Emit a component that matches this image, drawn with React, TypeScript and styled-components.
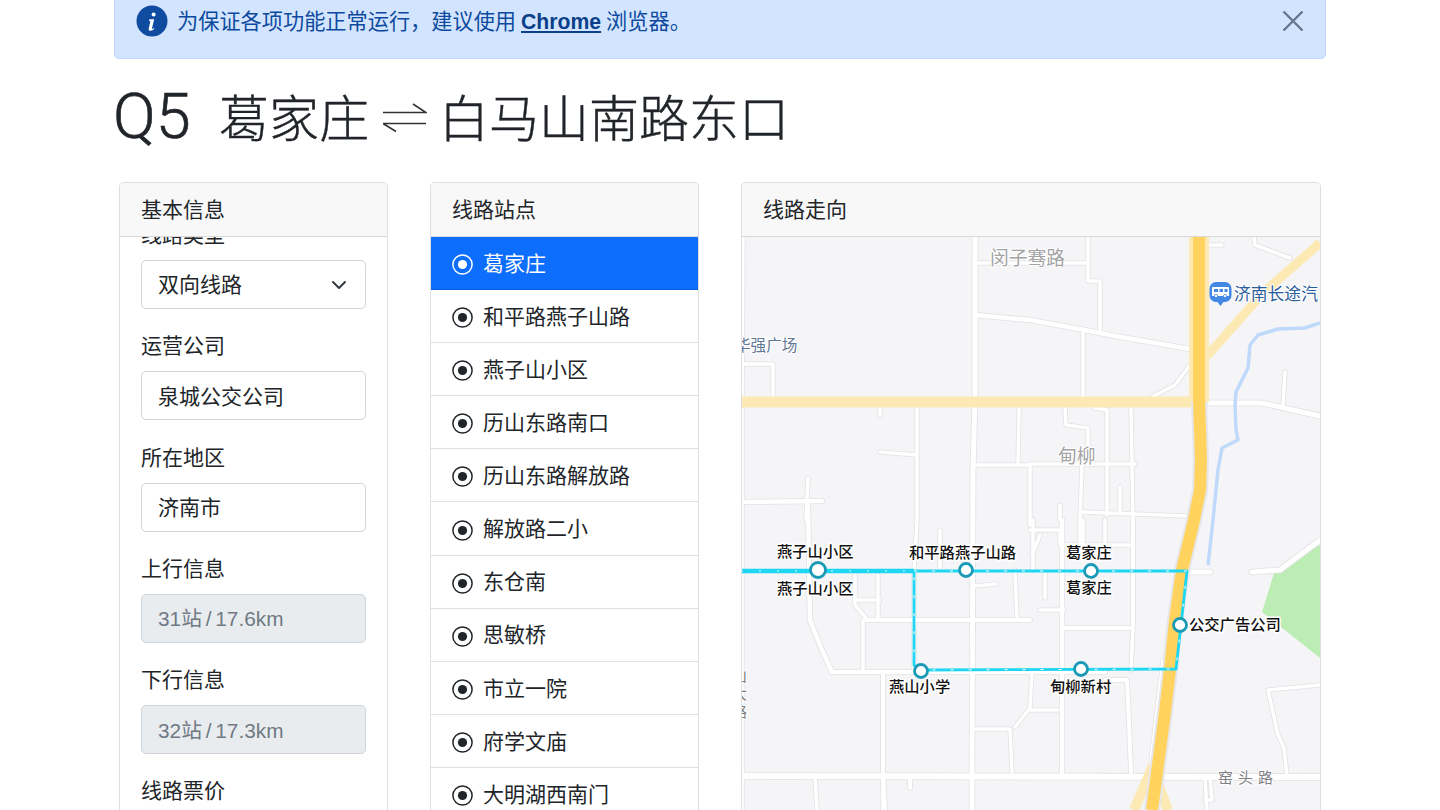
import React from 'react';
import styled, { createGlobalStyle } from 'styled-components';

const FONT = `"Liberation Sans", "Noto Sans CJK SC", sans-serif`;
const Global = createGlobalStyle`
  html, body { margin: 0; padding: 0; height: 810px; overflow: hidden; background: #fff; }
  body { font-family: ${FONT}; font-size: 21px; line-height: 1.5; color: #212529; }
`;
const Page = styled.div`
  width: 1212px; height: 810px; margin: 0 auto; overflow: hidden;
`;
const Alert = styled.div`
  display: flex; align-items: center; box-sizing: border-box;
  height: 89px; margin-top: -30px; padding: 35px 20px 22px 21px; font-size: 21.2px;
  background: #d3e5fe; border: 1px solid #bcd7fb; border-radius: 5px; color: #0d4a9e;
`;
const AlertBadge = styled.svg`
  width: 32px; height: 32px; margin-right: 9px; flex: none;
`;
const AlertMessage = styled.span`
  position: relative; top: 1px; flex: none;
`;
const AlertLink = styled.a`
  font-weight: 700; color: #0b3f8a; text-decoration: underline; margin: 0 5px;
`;
const CloseIcon = styled.svg`
  width: 24px; height: 24px; margin-left: auto; flex: none;
`;
const Title = styled.h1`
  display: flex; align-items: center; height: 60px; margin: 29px 0 34px 0;
  font-family: "Noto Sans CJK SC", sans-serif; font-weight: 300; font-size: 50px; line-height: 60px; color: #212529;
  -webkit-text-stroke: 0.4px #212529;
`;
const RouteCode = styled.span`
  font-family: Roboto, "Liberation Sans", sans-serif; font-weight: 300; font-size: 63px;
  width: 105px; position: relative; top: -1px; left: -1px; -webkit-text-stroke: 0.6px #212529;
`;
const TitleStop = styled.span`
  margin-top: -6px;
`;
const Arrows = styled.svg`
  width: 44px; height: 30px; margin: 0 12px 0 14px; flex: none;
`;
const Columns = styled.div`
  display: grid; grid-template-columns: 269px 269px 580px; column-gap: 42px; padding: 0 5px;
`;
const Card = styled.section`
  box-sizing: border-box; height: 700px; background: #fff;
  border: 1px solid rgba(0,0,0,.125); border-radius: 5px 5px 0 0; overflow: hidden;
`;
const CardHead = styled.header`
  box-sizing: border-box; height: 54px; padding: 11px 21px; line-height: 31px;
  background: #f8f8f8; border-bottom: 1px solid rgba(0,0,0,.125);
`;
const FormBody = styled.div`
  height: 640px; overflow: hidden; padding: 0 21px;
`;
const FormInner = styled.div`
  margin-top: -18.5px;
`;
const Group = styled.div`
  margin-bottom: 20.7px;
`;
const Label = styled.label`
  display: block; line-height: 31.2px; margin-bottom: 10.4px; position: relative; top: 0.5px;
`;
const Field = styled.div<{ $disabled?: boolean }>`
  display: flex; align-items: center; justify-content: space-between; box-sizing: border-box;
  height: 49px; padding: 1px 17px 0 16px; border: 1px solid #ced4da; border-radius: 5px;
  background: ${p => (p.$disabled ? '#e9ecef' : '#fff')};
  color: ${p => (p.$disabled ? '#6f7a84' : '#212529')};
  font-size: ${p => (p.$disabled ? '20.8px' : '21px')};
  word-spacing: ${p => (p.$disabled ? '-2px' : '0')};
`;
const Chevron = styled.svg`
  width: 16px; height: 16px; margin-right: 1px;
`;
const StopRow = styled.div<{ $active?: boolean }>`
  display: flex; align-items: center; gap: 10px; box-sizing: border-box; height: 53.1px;
  padding: 1px 21px 0; border-bottom: 1px solid rgba(0,0,0,.125);
  background: ${p => (p.$active ? '#0d6efd' : '#fff')};
  color: ${p => (p.$active ? '#fff' : '#212529')};
`;
const StopIcon = styled.svg`
  width: 21px; height: 21px; flex: none; margin-top: 2px;
`;
const MapSvg = styled.svg`
  display: block; width: 578px; height: 574px;
`;
const RoadCasing = styled.polyline`
  fill: none; stroke: #e2e2e5; stroke-linejoin: round; stroke-linecap: round;
`;
const RoadFill = styled.polyline`
  fill: none; stroke: #fff; stroke-linejoin: round; stroke-linecap: round;
`;
const Highway = styled.polyline<{ $tone: string }>`
  fill: none; stroke: ${p => p.$tone}; stroke-linejoin: round;
`;
const PlaceText = styled.text<{ $tone: string; $size: number }>`
  font-family: "Noto Sans CJK SC", sans-serif; font-size: ${p => p.$size}px; fill: ${p => p.$tone};
  paint-order: stroke; stroke: #fff; stroke-width: 2px;
`;
const StationText = styled.text`
  font-family: "Noto Sans CJK SC", sans-serif; font-size: 15.3px; font-weight: 500; fill: #111;
  paint-order: stroke; stroke: #fff; stroke-width: 3px; stroke-linejoin: round;
`;

type Road = { p: string; w?: number };
const roads: Road[] = [
  { p: '743,237 742,400' }, { p: '742,408 742,810' },
  { p: '975,237 975,400 973,470 972,776 972,810', w: 5 },
  { p: '975,263 1088,263' }, { p: '1088,237 1088,281 1100,281 1100,330' },
  { p: '975,315 1030,320 1090,331 1115,336 1190,349', w: 4.5 }, { p: '1083,333 1083,397' },
  { p: '742,364 773,364 773,396' }, { p: '1190,365 1175,385 1152,397' },
  { p: '1210,403 1262,403 1320,416', w: 5 }, { p: '1285,372 1283,405' },
  { p: '1208,245 1222,245' }, { p: '1254,237 1255,245 1290,258' },
  { p: '1065,408 1066,425 1088,428 1088,450' }, { p: '1095,408 1107,410 1107,515' },
  { p: '1131,408 1133,520 1133,570 1133,626' }, { p: '1030,464 1135,464' },
  { p: '1082,465 1080,520 1080,545' }, { p: '1120,487 1120,514' }, { p: '1060,505 1060,520' },
  { p: '1082,512 1187,516' }, { p: '917,408 917,520 914,571 914,670' }, { p: '880,452 917,455' },
  { p: '880,408 880,416' }, { p: '808,478 806,520' }, { p: '742,502 822,501', w: 4.5 },
  { p: '1019,408 1018,463' }, { p: '975,465 1030,465 1030,525' },
  { p: '808,505 810,620 822,650 832,672 1030,672 1105,672', w: 4.5 },
  { p: '855,575 855,605 866,618' }, { p: '855,600 880,600' }, { p: '878,575 878,620' },
  { p: '865,620 1030,620', w: 4 }, { p: '863,620 863,670' }, { p: '883,672 883,770 885,810', w: 4 },
  { p: '741,776 1320,777', w: 6 }, { p: '815,776 817,810' }, { p: '883,776 883,810' }, { p: '910,776 910,788', w: 4 },
  { p: '975,729 1010,729' }, { p: '1010,730 1012,772' }, { p: '1015,727 1030,708 1032,672' },
  { p: '975,586 996,584' }, { p: '1015,570 1017,620' }, { p: '1030,530 1060,530 1060,545' }, { p: '940,530 940,568' },
  { p: '1033,520 1033,570' }, { p: '1062,520 1062,772', w: 4.5 }, { p: '1030,710 1058,710' },
  { p: '1062,628 1130,628', w: 4 }, { p: '1133,520 1133,628 1131,670' }, { p: '1045,573 1045,598' }, { p: '1040,610 1064,610' },
  { p: '1105,680 1127,680 1128,700 1131,772', w: 4 }, { p: '1062,545 1130,545' }, { p: '1040,535 1032,555' },
  { p: '1187,572 1210,572', w: 5 }, { p: '1252,572 1280,570 1320,540', w: 5 },
  { p: '1320,685 1268,690 1278,735 1284,748 1287,776', w: 3.5 }, { p: '1205,776 1207,810' }, { p: '1210,777 1212,800 1205,800' },
  { p: '1163,660 1150,770' }, { p: '1105,520 1105,545' }, { p: '1083,520 1083,545' },
];

const river = '1320,323 1305,328 1278,329 1258,335 1250,345 1248,368 1236,392 1235,405 1236,430 1238,440 1222,448 1218,470 1213,520 1208,565';
const mainRoad = '1199,237 1199,400 1201,460 1200,490 1194,520 1182,570 1175,620 1170,670 1164,720 1152,810';
const routeFull = '914,571 1187,571 1176,669 921,670 914,665 914,571';

const stations: [number, number, number][] = [
  [818, 570, 7.5], [966, 570, 6.5], [1091, 571, 6.5], [1180, 625, 6.5], [1081, 669, 6.5], [921, 671, 6.5],
];
const stationLabels: [string, number, number][] = [
  ['燕子山小区', 777, 557], ['燕子山小区', 777, 594], ['和平路燕子山路', 909, 558],
  ['葛家庄', 1066, 558], ['葛家庄', 1066, 593], ['公交广告公司', 1189, 630],
  ['燕山小学', 889, 692], ['甸柳新村', 1050, 692],
];
const fields: { label: string; value: string; disabled?: boolean; select?: boolean }[] = [
  { label: '线路类型', value: '双向线路', select: true },
  { label: '运营公司', value: '泉城公交公司' },
  { label: '所在地区', value: '济南市' },
  { label: '上行信息', value: '31站 / 17.6km', disabled: true },
  { label: '下行信息', value: '32站 / 17.3km', disabled: true },
  { label: '线路票价', value: '2元', disabled: false },
];
const stops = ['葛家庄', '和平路燕子山路', '燕子山小区', '历山东路南口', '历山东路解放路', '解放路二小', '东仓南', '思敏桥', '市立一院', '府学文庙', '大明湖西南门'];

const RecordIcon = ({ color }: { color: string }) => (
  <StopIcon viewBox="0 0 21 21">
    <circle cx="10.5" cy="10.5" r="9.6" fill="none" stroke={color} strokeWidth="1.5" />
    <circle cx="10.5" cy="10.5" r="4.6" fill={color} />
  </StopIcon>
);

export default function App() {
  return (
    <Page>
      <Global />
      <Alert>
        <AlertBadge viewBox="0 0 32 32">
          <circle cx="16" cy="16" r="15.5" fill="#0f4c9f" />
          <circle cx="17.6" cy="9.4" r="2" fill="#fff" />
          <path d="M13.4 14.2h4.8l-2.2 9c-.15.7.5.9 1.2.4l.8-.6.4.7c-1.3 1.3-2.5 2-3.9 2-1.4 0-2.1-.9-1.8-2.3l1.7-7.2-1.3-.3z" fill="#fff" />
        </AlertBadge>
        <AlertMessage>
          为保证各项功能正常运行，建议使用<AlertLink>Chrome</AlertLink>浏览器。
        </AlertMessage>
        <CloseIcon viewBox="0 0 24 24">
          <path d="M2.5 2.5 21.5 21.5M21.5 2.5 2.5 21.5" stroke="#67768c" strokeWidth="2.4" fill="none" />
        </CloseIcon>
      </Alert>
      <Title>
        <RouteCode>Q5</RouteCode>
        <TitleStop>葛家庄</TitleStop>
        <Arrows viewBox="0 0 44 30">
          <path d="M0 9.5H43L30 1M43 20.5H0L13 28.5" fill="none" stroke="#333" strokeWidth="1.6" />
        </Arrows>
        <TitleStop>白马山南路东口</TitleStop>
      </Title>
      <Columns>
        <Card>
          <CardHead>基本信息</CardHead>
          <FormBody>
            <FormInner>
              {fields.map(f => (
                <Group key={f.label}>
                  <Label>{f.label}</Label>
                  <Field $disabled={f.disabled}>
                    {f.value}
                    {f.select && (
                      <Chevron viewBox="0 0 16 16">
                        <path d="M2 5l6 6 6-6" fill="none" stroke="#343a40" strokeWidth="2" strokeLinecap="round" strokeLinejoin="round" />
                      </Chevron>
                    )}
                  </Field>
                </Group>
              ))}
            </FormInner>
          </FormBody>
        </Card>
        <Card>
          <CardHead>线路站点</CardHead>
          {stops.map((s, i) => (
            <StopRow key={s} $active={i === 0}>
              <RecordIcon color={i === 0 ? '#fff' : '#212529'} />
              {s}
            </StopRow>
          ))}
        </Card>
        <Card>
          <CardHead>线路走向</CardHead>
          <MapSvg viewBox="742 237 578 574">
            <rect x="742" y="237" width="578" height="574" fill="#f5f5f7" />
            <polygon points="1320,545 1275,570 1262,612 1320,658" fill="#bcedb4" />
            {roads.map(r => <RoadCasing key={'c' + r.p} points={r.p} strokeWidth={(r.w ?? 3.5) + 1.6} />)}
            {roads.map(r => <RoadFill key={'f' + r.p} points={r.p} strokeWidth={r.w ?? 3.5} />)}
            <Highway $tone="#bfd9fb" points={river} strokeWidth={3.5} />
            <Highway $tone="#fde9b4" points="741,402 1197,402" strokeWidth={11} />
            <Highway $tone="#fde9b4" points="1207,356 1263,293 1320,243" strokeWidth={9} />
            <Highway $tone="#fde9b4" points="1134,810 1152,768 1168,810" strokeWidth={10} />
            <Highway $tone="#e6e6e8" points={mainRoad} strokeWidth={16} />
            <Highway $tone="#fde9b4" points="1199,237 1199,402" strokeWidth={20} />
            <Highway $tone="#ffd35e" points={mainRoad} strokeWidth={12} />

            <PlaceText $tone="#a3a3a6" $size={18.8} x="990" y="265">闵子骞路</PlaceText>
            <PlaceText $tone="#a3a3a6" $size={18.8} x="1058" y="463">甸柳</PlaceText>
            <PlaceText $tone="#5f7694" $size={15.6} x="735" y="351">华强广场</PlaceText>
            <PlaceText $tone="#7a7a7a" $size={15} x="732" y="681">山</PlaceText>
            <PlaceText $tone="#7a7a7a" $size={15} x="732" y="699">大</PlaceText>
            <PlaceText $tone="#7a7a7a" $size={15} x="732" y="717">路</PlaceText>
            <PlaceText $tone="#2b5c9e" $size={16.8} x="1234" y="300">济南长途汽</PlaceText>
            <PlaceText $tone="#808084" $size={15} x="1218" y="783" letterSpacing="5">窑头路</PlaceText>

            <path d="M1216 282h9a6.5 6.5 0 0 1 6.5 6.5v7a6.5 6.5 0 0 1-6.5 6.5h-1.5l-3 4-3-4h-1.5a6.5 6.5 0 0 1-6.5-6.5v-7a6.5 6.5 0 0 1 6.5-6.5z" fill="#4288e4" />
            <path d="M1213 287h15a1 1 0 0 1 1 1v8h-17v-8a1 1 0 0 1 1-1z" fill="#fff" />
            <path d="M1214 289h4v3h-4zM1219.5 289h3.5v3h-3.5zM1224.5 289h3v3h-3z" fill="#4288e4" />
            <circle cx="1216" cy="296" r="1.6" fill="#fff" stroke="#4288e4" strokeWidth=".8" />
            <circle cx="1225" cy="296" r="1.6" fill="#fff" stroke="#4288e4" strokeWidth=".8" />

            <Highway $tone="#1fd6f2" points="741,571 914,571" strokeWidth={4.5} />
            <Highway $tone="#1fd6f2" points={routeFull} strokeWidth={2.8} />
            <Highway $tone="#d8f8ff" points="741,571 914,571" strokeWidth={1} strokeDasharray="2 16" />
            <Highway $tone="#ffffff" points={routeFull} strokeWidth={1} strokeDasharray="3 15" />
            {stations.map(([x, y, r]) => (
              <circle key={x} cx={x} cy={y} r={r} fill="#fff" stroke="#1b9ab6" strokeWidth={2.8} />
            ))}
            {stationLabels.map(([t, x, y]) => (
              <StationText key={t + y} x={x} y={y}>{t}</StationText>
            ))}
          </MapSvg>
        </Card>
      </Columns>
    </Page>
  );
}
